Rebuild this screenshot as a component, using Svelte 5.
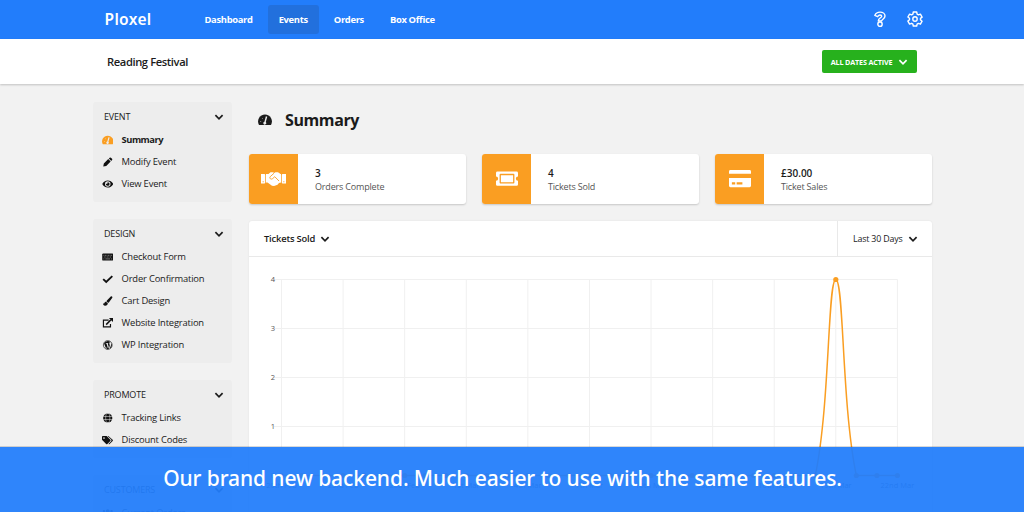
<script lang="ts">
  // Navigation
  const navItems = ['Dashboard', 'Events', 'Orders', 'Box Office'];
  let activeNav = $state('Events');

  const groups = [
    {
      title: 'Event',
      items: [
        {label: 'Summary', icon: 'gauge', active: true},
        {label: 'Modify Event', icon: 'pencil'},
        {label: 'View Event', icon: 'eye'},
      ],
    },
    {
      title: 'Design',
      items: [
        {label: 'Checkout Form', icon: 'keyboard'},
        {label: 'Order Confirmation', icon: 'check'},
        {label: 'Cart Design', icon: 'brush'},
        {label: 'Website Integration', icon: 'external'},
        {label: 'WP Integration', icon: 'wordpress'},
      ],
    },
    {
      title: 'Promote',
      items: [
        {label: 'Tracking Links', icon: 'globe'},
        {label: 'Discount Codes', icon: 'tags'},
      ],
    },
    {
      title: 'Customers',
      items: [{label: 'Current Orders', icon: 'users'}],
    },
  ];

  const stats = [
    {value: '3', label: 'Orders Complete', icon: 'handshake'},
    {value: '4', label: 'Tickets Sold', icon: 'ticket'},
    {value: '£30.00', label: 'Ticket Sales', icon: 'card'},
  ];

  // Chart: 31 days, a label on every third one
  const sales = Array.from({length: 31}, (_, i) => (i === 27 ? 4 : 0));
  const dates = ['20th Feb', '23rd Feb', '26th Feb', '1st Mar', '4th Mar', '7th Mar', '10th Mar', '13th Mar', '16th Mar', '19th Mar', '22nd Mar'];
  const ticks = [4, 3, 2, 1, 0];
  const xOf = (day: number) => 32.5 + day * 20.53;
  const yOf = (value: number) => 218.5 - value * 49;
  const points = sales.map((value, i) => ({x: xOf(i), y: yOf(value)}));
  const bottom = yOf(0);

  function smoothPath(pts: {x: number; y: number}[], tension = 0.4) {
    const clamp = (y: number) => Math.max(yOf(4), Math.min(bottom, y));
    const controls = pts.map((p, i) => {
      const prev = pts[i - 1] ?? p;
      const next = pts[i + 1] ?? p;
      const d1 = Math.hypot(p.x - prev.x, p.y - prev.y);
      const d2 = Math.hypot(next.x - p.x, next.y - p.y);
      const fa = (tension * d1) / (d1 + d2);
      const fb = (tension * d2) / (d1 + d2);
      return {
        ax: p.x - fa * (next.x - prev.x),
        ay: clamp(p.y - fa * (next.y - prev.y)),
        bx: p.x + fb * (next.x - prev.x),
        by: clamp(p.y + fb * (next.y - prev.y)),
      };
    });
    return pts
      .map((p, i) => i === 0
        ? `M${p.x},${p.y}`
        : `C${controls[i - 1].bx},${controls[i - 1].by} ${controls[i].ax},${controls[i].ay} ${p.x},${p.y}`)
      .join(' ');
  }
</script>

{#snippet chevron()}
  <svg class="chevron" viewBox="0 0 10 8" width="10" height="8"><path d="M1.400 2.200L5 5.800l3.600-3.600" fill="none" stroke="currentColor" stroke-width="1.700" /></svg>
{/snippet}

{#snippet icon(name: string)}
  {#if name === 'gauge'}
    <svg viewBox="0 0 24 20"><path fill="currentColor" d="M12 1a12 12 0 0 0-10.300 18h20.600A12 12 0 0 0 12 1z" /><g class="cut"><circle cx="4.800" cy="13" r=".8" /><circle cx="7.500" cy="7.500" r=".8" /><path d="M13.500 4l2.400.7-2.500 9a2.600 2.600 0 1 1-2.400-.6z" /></g></svg>
  {:else if name === 'pencil'}
    <svg viewBox="0 0 20 20"><path fill="currentColor" d="M1 19l1.200-6L11 4.200l4.800 4.800L7 17.800zM12.200 3l1.600-1.600a1.800 1.800 0 0 1 2.500 0l2.300 2.300a1.800 1.800 0 0 1 0 2.500L17 7.800z" /></svg>
  {:else if name === 'eye'}
    <svg viewBox="0 0 24 20"><path fill="currentColor" fill-rule="evenodd" d="M12 2.500c5 0 9.200 2.900 11.500 7.500-2.300 4.600-6.500 7.500-11.500 7.500S2.800 14.600.5 10C2.800 5.400 7 2.500 12 2.500zm0 1.800a5.700 5.700 0 1 0 0 11.400 5.700 5.700 0 0 0 0-11.400zm0 1.900a3.800 3.800 0 1 1-3.700 2.900 1.900 1.900 0 0 0 2.800-2.800z" /></svg>
  {:else if name === 'keyboard'}
    <svg viewBox="0 0 24 20"><rect x=".5" y="2.500" width="23" height="15" rx="2" fill="currentColor" /><g class="lines"><path d="M3 6.500h18M3.800 10h16.400" stroke-dasharray="2 1.200" /><path d="M3 14h2m2 0h10m2 0h2" /></g></svg>
  {:else if name === 'check'}
    <svg viewBox="0 0 24 20"><path d="M2.500 10.200l6.300 6L21.500 4" fill="none" stroke="currentColor" stroke-width="4" /></svg>
  {:else if name === 'brush'}
    <svg viewBox="0 0 20 20"><path fill="currentColor" d="M17.300.5c1.500 0 2.600 1.500 1.800 3l-6.500 8.800c-.6.700-1.200 1-2 1L7.500 11c0-.8.200-1.400.8-2L16 1.200c.4-.4.800-.7 1.300-.7zM6.500 11.500l3.600 2.900c0 3-2 5.100-5.200 5.100C1.900 19.500.5 17.500.5 14.700c2 1.200 2.700.4 3-1 .5-1.300 1.600-2.200 3-2.200z" /></svg>
  {:else if name === 'external'}
    <svg viewBox="0 0 24 22"><path d="M14 4.500H2.500v15h15.500V13" fill="none" stroke="currentColor" stroke-width="2.600" /><path d="M8.500 14.500L19 4" fill="none" stroke="currentColor" stroke-width="3.400" /><path fill="currentColor" d="M14.500 0H23.500v9z" /></svg>
  {:else if name === 'wordpress'}
    <svg viewBox="0 0 20 20"><circle cx="10" cy="10" r="8.800" fill="none" stroke="currentColor" stroke-width="1.300" /><path fill="currentColor" d="M2.600 6.800L7 18l2.100-6L7.400 7.200H6V6.200h5v1H9.800l3 8.800 1.200-4.300c.5-1.800-1-3.300-1-5 0-1.600 1-2.500 2.200-2.700A8 8 0 0 0 3.300 6zM17 6c.3 2-.3 3.700-.8 5.300l-2.300 6.200A8.300 8.300 0 0 0 17 6zM10.200 12l-2.200 6.300 4.500-.1z" /></svg>
  {:else if name === 'globe'}
    <svg viewBox="0 0 20 20"><circle cx="10" cy="10" r="9.200" fill="currentColor" /><g class="lines"><path d="M1 7h18M1 13h18" /><ellipse cx="10" cy="10" rx="4.200" ry="9.500" /></g></svg>
  {:else if name === 'tags'}
    <svg viewBox="0 0 26 20"><path fill="currentColor" fill-rule="evenodd" d="M0 2.500v7l9.300 9.300c.8.800 2 .8 2.800 0l6.800-6.800c.8-.8.800-2 0-2.800L10.500.8H1.700C.7.800 0 1.500 0 2.500zm4.500 1a1.900 1.900 0 1 1 0 3.800 1.900 1.900 0 0 1 0-3.800z" /><path fill="currentColor" d="M12.500.8h1.800l9.800 8.400c.8.800.8 2 0 2.800l-7 7c-.7.700-1.700.7-2.500.1l6-6.400c1.100-1.100 1.100-2.700 0-3.800z" /></svg>
  {:else if name === 'users'}
    <svg viewBox="0 0 24 20"><g fill="currentColor"><circle cx="12" cy="6" r="4" /><circle cx="4" cy="6" r="2.500" /><circle cx="20" cy="6" r="2.500" /><path d="M5 19c0-5 3-7 7-7s7 2 7 7zM0 15c0-4 2-5 5-5l1 2-2 3zm24 0c0-4-2-5-5-5l-1 2 2 3z" /></g></svg>
  {:else if name === 'handshake'}
    <svg viewBox="0 0 50 32"><g fill="currentColor"><path fill-rule="evenodd" d="M0 6h6.500a2 2 0 0 1 2 2v15a2 2 0 0 1-2 2H0zm3.300 14.500v2h2v-2zM50 6h-6.500a2 2 0 0 0-2 2v15a2 2 0 0 0 2 2H50zm-3.300 14.500v2h-2v-2z" /><path d="M10 6h5l4-3.500h5l2.500 1.600L29 2.500h5L39 6h1v17l-4 1-3 3.500-4 1.500-3 1.200-4-.7-9-6.500h-3z" /></g><path class="clasp" d="M26 4.500l-7.500 6.700c-1.200 1.200-1 3.300.3 4.300 1.300 1 3 .9 4.200-.1l4.500-4 8.500 8.600" /></svg>
  {:else if name === 'ticket'}
    <svg viewBox="0 0 46 32"><path fill="currentColor" fill-rule="evenodd" d="M3 1h40a3 3 0 0 1 3 3v7.500a4.500 4.500 0 0 0 0 9V28a3 3 0 0 1-3 3H3a3 3 0 0 1-3-3v-7.500a4.500 4.500 0 0 0 0-9V4a3 3 0 0 1 3-3zm6.500 5a2 2 0 0 0-2 2v16c0 1.100.9 2 2 2h27a2 2 0 0 0 2-2V8a2 2 0 0 0-2-2zm.7 2.700h25.600v14.600H10.200z" /></svg>
  {:else if name === 'card'}
    <svg viewBox="0 0 46 36"><path fill="currentColor" fill-rule="evenodd" d="M3 0h40a3 3 0 0 1 3 3v5H0V3a3 3 0 0 1 3-3zM0 17h46v16a3 3 0 0 1-3 3H3a3 3 0 0 1-3-3zm6 8.500v5h7v-5zm10 0v5h12v-5z" /></svg>
  {/if}
{/snippet}

<div class="page">
  <header class="topbar">
    <div class="logo">Ploxel</div>
    <nav>
      {#each navItems as item (item)}
        <button class:current={item === activeNav} onclick={() => (activeNav = item)}>{item}</button>
      {/each}
    </nav>
    <div class="tools">
      <svg viewBox="0 0 14 18" width="14" height="17" fill="none" stroke="currentColor" stroke-width="1.500">
        <path d="M1.500 4.700C2.500 2.300 4.400 1.200 7 1.200c3.200 0 5.300 1.700 5.300 4.200 0 3.200-3.600 3.300-3.600 5.200H5.200C5.200 7.300 8.800 7.200 8.800 5.500c0-.9-.8-1.300-1.800-1.300S5.300 4.900 4.500 6z" stroke-linejoin="round" />
        <circle cx="7" cy="14" r="2.300" />
      </svg>
      <svg viewBox="0 0 16 16" width="16" height="16" fill="none" stroke="currentColor" stroke-width="1.400" stroke-linejoin="round">
        <path d="M6.300 1h3.400l.4 2.100 1.300.8 2-.8 1.700 3-1.600 1.300v1.500l1.600 1.300-1.700 3-2-.8-1.300.8L9.700 15H6.300l-.4-1.900-1.300-.8-2 .8-1.700-3 1.600-1.300V7.300L.9 6l1.700-2.900 2 .8 1.300-.8z" />
        <circle cx="8" cy="8" r="2.200" />
      </svg>
    </div>
  </header>

  <div class="subbar">
    <h2>Reading Festival</h2>
    <button class="dates">ALL DATES ACTIVE {@render chevron()}</button>
  </div>

  <div class="content">
    <aside>
      {#each groups as group (group.title)}
        <section class="group">
          <h3>{group.title} {@render chevron()}</h3>
          <ul>
            {#each group.items as item (item.label)}
              <li class:active={item.active}>
                <span class="icon {item.icon}">{@render icon(item.icon)}</span>
                {item.label}
              </li>
            {/each}
          </ul>
        </section>
      {/each}
    </aside>

    <main>
      <h1><span class="title-icon">{@render icon('gauge')}</span>Summary</h1>

      <div class="stats">
        {#each stats as stat (stat.label)}
          <div class="stat">
            <div class="stat-icon {stat.icon}">{@render icon(stat.icon)}</div>
            <div class="stat-text">
              <strong>{stat.value}</strong>
              <span>{stat.label}</span>
            </div>
          </div>
        {/each}
      </div>

      <section class="panel">
        <div class="panel-head">
          <button class="metric">Tickets Sold {@render chevron()}</button>
          <button class="range">Last 30 Days {@render chevron()}</button>
        </div>
        <svg class="chart" viewBox="0 0 683 260" width="683" height="260">
          {#each ticks as tick (tick)}
            <line class="grid" x1="25" x2="648.500" y1={yOf(tick)} y2={yOf(tick)} />
            <text x="26" y={yOf(tick) + 2} text-anchor="end">{tick}</text>
          {/each}
          {#each dates as date, i (date)}
            <line class="grid" x1={xOf(i * 3)} x2={xOf(i * 3)} y1={yOf(4)} y2={bottom + 6} />
            <text x={xOf(i * 3)} y={bottom + 12} text-anchor="middle">{date}</text>
          {/each}
          <path class="line" d={smoothPath(points)} />
          {#each points as p (p.x)}
            <circle cx={p.x} cy={p.y} r="2.600" />
          {/each}
        </svg>
      </section>
    </main>
  </div>

  <div class="banner">Our brand new backend. Much easier to use with the same features.</div>
</div>

<style>
    :global(body) {
        margin: 0;
    }

    .page {
        position: relative;
        width: 1024px;
        height: 512px;
        overflow: hidden;
        background: #f2f2f2;
        color: #1b1b1b;
        font-family: "Open Sans", "Noto Sans", sans-serif;
        font-size: 9.4px;
        letter-spacing: -0.18px;
    }

    button {
        border: 0;
        padding: 0;
        background: none;
        color: inherit;
        font: inherit;
        letter-spacing: inherit;
    }

    svg {
        display: block;
        flex: none;
    }

    h1,
    h2,
    h3,
    ul {
        margin: 0;
        padding: 0;
        list-style: none;
    }

    .topbar {
        display: flex;
        align-items: center;
        box-sizing: border-box;
        height: 39px;
        padding: 0 101px 1px 104.5px;
        background: #227dfb;
        color: #fff;
    }

    .logo {
        width: 89px;
        font: 600 15.5px "Noto Sans", sans-serif;
        letter-spacing: 0.35px;
    }

    nav {
        display: flex;
        gap: 4px;
    }

    nav button {
        height: 29px;
        padding: 0 11px;
        border-radius: 3px;
        font-weight: 700;
        font-size: 9.4px;
        letter-spacing: -0.32px;
    }

    nav .current {
        background: #2270dd;
    }

    .tools {
        display: flex;
        align-items: center;
        gap: 20px;
        margin-left: auto;
    }

    .subbar {
        display: flex;
        align-items: center;
        justify-content: space-between;
        height: 45px;
        padding: 0 107px;
        background: #fff;
        box-shadow: 0 1px 2px rgba(0, 0, 0, 0.2);
    }

    h2 {
        font-size: 11.2px;
        font-weight: 600;
        letter-spacing: -0.4px;
    }

    .dates {
        display: flex;
        align-items: center;
        justify-content: center;
        gap: 6px;
        width: 95px;
        height: 23px;
        border-radius: 2px;
        background: #27b11d;
        color: #fff;
        font-size: 7.2px;
        font-weight: 700;
        letter-spacing: -0.15px;
    }

    .content {
        display: flex;
        gap: 17px;
        padding: 18px 92px 0 93px;
    }

    aside {
        display: flex;
        flex-direction: column;
        gap: 17px;
        width: 139px;
        margin-top: -0.3px;
    }

    .group {
        padding: 3px 8px 7px 11px;
        border-radius: 3px;
        background: #ededed;
    }

    h3 {
        display: flex;
        align-items: center;
        justify-content: space-between;
        height: 24px;
        font-size: 9px;
        font-weight: 400;
        text-transform: uppercase;
    }

    li {
        display: flex;
        align-items: center;
        height: 22px;
        margin-left: -2px;
        white-space: nowrap;
    }

    li.active {
        font-weight: 700;
        letter-spacing: -0.5px;
    }

    .icon {
        display: flex;
        justify-content: center;
        width: 11px;
        margin-right: 8.6px;
        color: #111;
    }

    .icon svg {
        width: 11.5px;
        height: 10px;
    }

    .icon.gauge {
        color: #fa9e22;
    }

    .cut {
        fill: #ededed;
    }

    .lines {
        fill: none;
        stroke: #ededed;
        stroke-width: 1;
    }

    main {
        width: 683px;
    }

    h1 {
        display: flex;
        align-items: center;
        height: 36px;
        margin-bottom: 16px;
        padding-left: 9px;
        font-size: 16px;
        font-weight: 700;
        letter-spacing: -0.4px;
    }

    .title-icon {
        width: 14px;
        margin-right: 13px;
    }

    .stats {
        display: grid;
        grid-template-columns: repeat(3, 217px);
        gap: 16px;
        margin-bottom: 17px;
    }

    .stat {
        display: flex;
        height: 50px;
        overflow: hidden;
        border-radius: 3px;
        background: #fff;
        box-shadow: 0 1px 2px rgba(0, 0, 0, 0.18);
    }

    .stat-icon {
        display: flex;
        align-items: center;
        justify-content: center;
        width: 49px;
        background: #fa9e22;
        color: #fff;
    }

    .stat-icon svg {
        width: 22px;
    }

    .stat-icon.handshake svg {
        width: 25px;
    }

    .clasp {
        fill: none;
        stroke: #fa9e22;
        stroke-width: 1.8;
    }

    .stat-text {
        display: flex;
        flex-direction: column;
        justify-content: center;
        padding: 2px 0 0 17px;
        line-height: 14px;
    }

    .stat-text strong {
        font-size: 10px;
        font-weight: 600;
        letter-spacing: 0;
    }

    .stat-text span {
        color: #555;
        font-size: 9px;
    }

    .panel {
        border-radius: 3px;
        background: #fff;
        box-shadow: 0 0 2px rgba(0, 0, 0, 0.08);
    }

    .panel-head {
        display: flex;
        justify-content: space-between;
        height: 35px;
        border-bottom: 1px solid #e9e9e9;
    }

    .panel-head button {
        display: flex;
        align-items: center;
        gap: 5px;
    }

    .metric {
        padding-left: 15px;
        font-weight: 600;
    }

    .panel-head .range {
        box-sizing: border-box;
        width: 95px;
        padding-left: 15px;
        border-left: 1px solid #e9e9e9;
        font-size: 8.9px;
    }

    .chart text {
        fill: #555;
        font-size: 7.5px;
        letter-spacing: 0;
    }

    .grid {
        stroke: #f0f0f0;
        stroke-width: 1;
    }

    .line {
        fill: none;
        stroke: #fa9e22;
        stroke-width: 1.5;
    }

    .chart circle {
        fill: #fa9e22;
    }

    .banner {
        position: absolute;
        left: 0;
        right: 0;
        bottom: 0;
        display: flex;
        align-items: center;
        justify-content: center;
        box-sizing: border-box;
        height: 65px;
        padding: 0 19px 4px 0;
        background: rgba(34, 125, 251, 0.94);
        box-shadow: 0 -1px 0 rgba(0, 0, 0, 0.15);
        color: #fff;
        font: 500 21px "Noto Sans", sans-serif;
        letter-spacing: -0.09px;
        white-space: nowrap;
    }
</style>
